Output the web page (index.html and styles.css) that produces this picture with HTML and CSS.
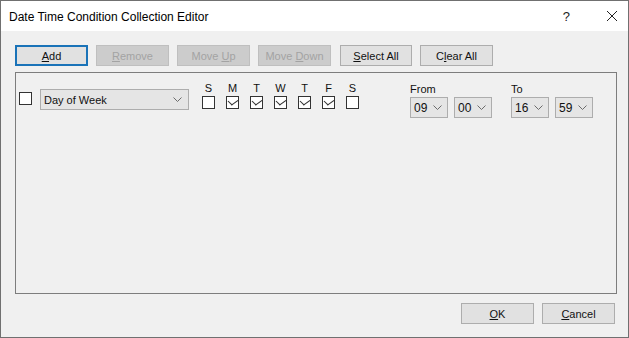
FILE: index.html
```html
<!DOCTYPE html>
<html lang="en">

<head>
  <meta charset="UTF-8">
  <title>Date Time Condition Collection Editor</title>
  <link rel="stylesheet" href="styles.css">
</head>

<body>
  <div class="window">
    <header class="titlebar">
      <span class="title">Date Time Condition Collection Editor</span>
      <span class="help">?</span>
      <svg class="close" width="12" height="12" viewBox="0 0 12 12">
        <path d="M1 1 L11 11 M11 1 L1 11" stroke="#222" stroke-width="1" fill="none" />
      </svg>
    </header>

    <main class="content">
      <div class="toolbar">
        <button class="btn btn-default"><u>A</u>dd</button>
        <button class="btn" disabled><u>R</u>emove</button>
        <button class="btn" disabled>Move <u>U</u>p</button>
        <button class="btn" disabled>Move <u>D</u>own</button>
        <button class="btn btn-gap"><u>S</u>elect All</button>
        <button class="btn">C<u>l</u>ear All</button>
      </div>

      <section class="panel">
        <div class="row">
          <span class="check row-check"></span>
          <div class="combo combo-type">
            <span>Day of Week</span>
            <svg class="chev" width="9" height="5" viewBox="0 0 9 5">
              <path d="M0.5 0.5 L4.5 4.5 L8.5 0.5" stroke="#6b6b6b" fill="none" />
            </svg>
          </div>

          <div class="days">
            <div class="day"><span class="day-label">S</span><span class="check"></span></div>
            <div class="day"><span class="day-label">M</span><span class="check on"></span></div>
            <div class="day"><span class="day-label">T</span><span class="check on"></span></div>
            <div class="day"><span class="day-label">W</span><span class="check on"></span></div>
            <div class="day"><span class="day-label">T</span><span class="check on"></span></div>
            <div class="day"><span class="day-label">F</span><span class="check on"></span></div>
            <div class="day"><span class="day-label">S</span><span class="check"></span></div>
          </div>

          <div class="time time-from">
            <span class="time-label">From</span>
            <div class="time-combos">
              <div class="combo combo-small"><span>09</span>
                <svg class="chev" width="9" height="5" viewBox="0 0 9 5"><path d="M0.5 0.5 L4.5 4.5 L8.5 0.5" stroke="#6b6b6b" fill="none" /></svg>
              </div>
              <div class="combo combo-small"><span>00</span>
                <svg class="chev" width="9" height="5" viewBox="0 0 9 5"><path d="M0.5 0.5 L4.5 4.5 L8.5 0.5" stroke="#6b6b6b" fill="none" /></svg>
              </div>
            </div>
          </div>

          <div class="time time-to">
            <span class="time-label">To</span>
            <div class="time-combos">
              <div class="combo combo-small"><span>16</span>
                <svg class="chev" width="9" height="5" viewBox="0 0 9 5"><path d="M0.5 0.5 L4.5 4.5 L8.5 0.5" stroke="#6b6b6b" fill="none" /></svg>
              </div>
              <div class="combo combo-small"><span>59</span>
                <svg class="chev" width="9" height="5" viewBox="0 0 9 5"><path d="M0.5 0.5 L4.5 4.5 L8.5 0.5" stroke="#6b6b6b" fill="none" /></svg>
              </div>
            </div>
          </div>
        </div>
      </section>

      <footer class="footer">
        <button class="btn"><u>O</u>K</button>
        <button class="btn"><u>C</u>ancel</button>
      </footer>
    </main>
  </div>
</body>

</html>
```

FILE: styles.css
```css
html {
  box-sizing: border-box;
  font-family: 'Liberation Sans', Arial, sans-serif;
  font-size: 11px;
  color: #000;
}

*,
*::before,
*::after {
  box-sizing: inherit;
}

body {
  margin: 0;
  background-color: #f0f0f0;
}

.window {
  width: 629px;
  height: 338px;
  border: 1px solid #707070;
  display: flex;
  flex-direction: column;
  background-color: #f0f0f0;
}

.titlebar {
  height: 30px;
  flex-shrink: 0;
  background-color: #fff;
  display: flex;
  align-items: center;
  padding: 0 0 0 8px;
}

.title {
  font-size: 12px;
  flex: 1;
  padding-top: 1px;
}

.help {
  font-size: 13px;
  color: #222;
  margin-right: 36px;
  padding-top: 1px;
}

.close {
  margin-right: 10px;
}

.content {
  flex: 1;
  padding: 14px 0 0 14px;
}

/* botones */
.toolbar {
  display: flex;
  gap: 8px;
  height: 21px;
}

.btn {
  width: 73px;
  height: 21px;
  padding: 0;
  font-family: inherit;
  font-size: 11px;
  color: #111;
  background-color: #e1e1e1;
  border: 1px solid #adadad;
  border-radius: 0;
}

.btn u {
  text-decoration-thickness: 1px;
  text-underline-offset: 1px;
}

.btn-default {
  border: 2px solid #1a73b8;
}

.btn:disabled {
  background-color: #cccccc;
  border-color: #bfbfbf;
  color: #a3a3a3;
}

.btn-gap {
  margin-left: 1px;
  width: 72px;
}

/* panel */
.panel {
  margin-top: 6px;
  width: 602px;
  height: 222px;
  border: 1px solid #7d7d7d;
  background-color: #f0f0f0;
  padding: 9px 0 0 3px;
}

.row {
  display: flex;
  align-items: flex-start;
}

.check {
  display: block;
  width: 13px;
  height: 13px;
  border: 1px solid #333;
  background-color: #fff;
  position: relative;
}

.check.on::after {
  content: "";
  position: absolute;
  left: 3px;
  top: 0px;
  width: 6px;
  height: 8px;
  border-right: 1px solid #333;
  border-bottom: 1px solid #333;
  transform: rotate(45deg) skewX(-10deg);
}

.row-check {
  margin-top: 10px;
}

.combo {
  height: 21px;
  background-color: #e5e5e5;
  border: 1px solid #adadad;
  display: flex;
  align-items: center;
  justify-content: space-between;
  padding: 0 6px 0 3px;
  font-size: 11px;
  color: #111;
}

.combo-type {
  margin: 7px 0 0 8px;
  width: 149px;
}

.combo-small {
  width: 38px;
  font-size: 12px;
  padding: 0 5px 0 3px;
}

.chev {
  display: block;
}

.days {
  display: flex;
  gap: 11px;
  margin-left: 13px;
}

.day {
  display: flex;
  flex-direction: column;
  align-items: center;
  width: 13px;
}

.day-label {
  height: 14px;
  line-height: 12px;
  font-size: 11px;
  color: #111;
}

.time {
  display: flex;
  flex-direction: column;
}

.time-from {
  margin-left: 51px;
}

.time-to {
  margin-left: 19px;
}

.time-label {
  height: 15px;
  line-height: 14px;
  font-size: 11px;
  color: #111;
}

.time-combos {
  display: flex;
  gap: 6px;
}

.footer {
  display: flex;
  justify-content: flex-end;
  gap: 8px;
  margin-top: 9px;
  padding-right: 13px;
}
```
